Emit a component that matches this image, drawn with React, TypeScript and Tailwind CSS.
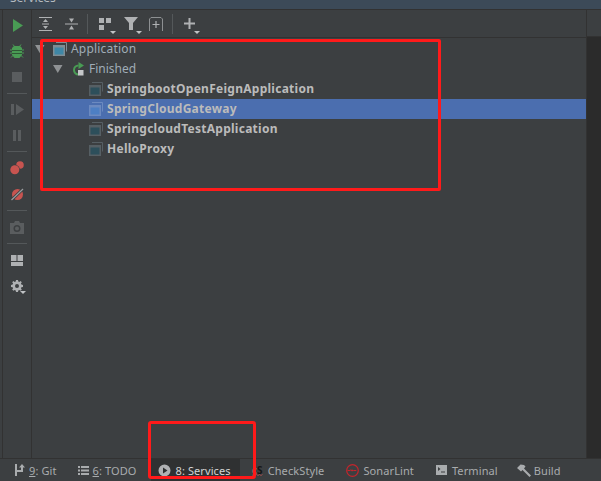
import React from "react";

const font = { fontFamily: '"Noto Sans", "Open Sans", sans-serif' };

function Stack({ sel, bright }: { sel?: boolean; bright?: boolean }) {
  const stroke = sel ? "#6c8ac0" : bright ? "#7f8c93" : "#565f64";
  const fill = sel ? "#4d7fc4" : bright ? "#3f87a6" : "#2d4f5b";
  return (
    <svg width="14" height="14" viewBox="0 0 14 14" className="shrink-0">
      <path d="M3 0.5h10.500v9" fill="none" stroke={stroke} />
      <rect x="0" y="3" width="12" height="11" fill={stroke} />
      <rect x="1.500" y="5.500" width="9" height="7" fill={fill} />
    </svg>
  );
}

function Tri({ className = "" }: { className?: string }) {
  return (
    <svg width="10" height="8" viewBox="0 0 10 8" className={`shrink-0 ${className}`}>
      <path d="M0 0h9.500L4.750 8z" fill="#8f9294" />
    </svg>
  );
}

function Caret() {
  return (
    <svg width="6" height="3" viewBox="0 0 6 3" className="absolute -bottom-[2px] -right-[3px]">
      <path d="M0 0h6L3 3z" fill="#c0c3c5" />
    </svg>
  );
}

function TopIcon({
  children,
  caret,
  className = "",
}: {
  children: React.ReactNode;
  caret?: boolean;
  className?: string;
}) {
  return (
    <div className={`relative w-4 h-4 flex items-center justify-center ${className}`}>
      {children}
      {caret && <Caret />}
    </div>
  );
}

function Slot({ children }: { children: React.ReactNode }) {
  return <div className="h-[26px] w-full flex items-center justify-center relative">{children}</div>;
}

function HSep({ className = "my-[3px]" }: { className?: string }) {
  return <div className={`w-[20px] h-px bg-[#54585a] ${className}`} />;
}

function VSep({ className = "" }: { className?: string }) {
  return <div className={`w-px h-5 bg-[#54585a] ${className}`} />;
}

function Row({ label, sel }: { label: string; sel?: boolean }) {
  return (
    <div className={`flex items-center h-5 pl-[57px] gap-[4px] ${sel ? "bg-[#4b6eaf]" : ""}`}>
      <Stack sel={sel} />
      <span className="text-[12px] font-bold text-[#bbbbbb] leading-none tracking-[0.27px]">{label}</span>
    </div>
  );
}

function ToolTab({
  icon,
  num,
  label,
  active,
  className = "",
  gap = "gap-[4px]",
}: {
  icon: React.ReactNode;
  num?: string;
  label: string;
  active?: boolean;
  className?: string;
  gap?: string;
}) {
  return (
    <div
      className={`flex items-center h-full text-[11px] tracking-[0.1px] ${gap} ${
        active ? "bg-[#2f3132] text-[#d4d4d4] pl-[7px] pr-[9px]" : "text-[#a9acae]"
      } ${className}`}
    >
      {icon}
      <span className="leading-none whitespace-nowrap">
        {num && <span className="underline">{num}</span>}
        {label}
      </span>
    </div>
  );
}

export default function App() {
  return (
    <div className="w-[601px] h-[481px] overflow-hidden bg-[#3c3f41] relative flex flex-col" style={font}>
      {/* title strip */}
      <div className="h-[9px] bg-[#3c4a58] overflow-hidden shrink-0">
        <div className="text-[12px] leading-none text-[#b5bbc0] pl-[10px] -mt-[8px]">Services</div>
      </div>

      <div className="flex flex-1 min-h-0 border-t border-[#323232]">
        {/* left toolbar */}
        <div className="w-[32px] shrink-0 border-r border-[#323232] flex">
          <div className="w-[3px] shrink-0 border-r border-[#323232]" />
          <div className="flex-1 flex flex-col items-center pt-[2px]">
            <Slot>
              <svg width="10" height="13" viewBox="0 0 10 13" className="ml-[1px]"><path d="M0 0l10 6.500L0 13z" fill="#499c54" /></svg>
            </Slot>
            <Slot>
              <svg width="14" height="14" viewBox="0 0 14 14">
                <path d="M4.500 2.500L3 .5M9.500 2.500L11 .5M3 6H0M3 9H0M3 11.500L1 13.500M11 6h3M11 9h3M11 11.500l2 2" stroke="#499c54" fill="none" />
                <path d="M4 2h6l2 2v7l-2.500 3h-5L2 11V4z" fill="#499c54" />
                <path d="M2 6.500h10M2 9.500h10" stroke="#2f5a35" />
              </svg>
            </Slot>
            <Slot><div className="w-[10px] h-[10px] bg-[#5a5d5f]" /></Slot>
            <HSep className="mt-[3px] mb-[2px]" />
            <Slot><svg width="13" height="13" viewBox="0 0 13 13"><path d="M0 1h3v11H0zM5 1l8 5.500L5 12z" fill="#5a5d5f" /></svg></Slot>
            <Slot><svg width="8" height="11" viewBox="0 0 8 11"><path d="M0 0h3v11H0zM5 0h3v11H5z" fill="#5a5d5f" /></svg></Slot>
            <HSep />
            <Slot>
              <svg width="14" height="14" viewBox="0 0 14 14"><circle cx="10" cy="4" r="3.800" fill="#c75450" /><circle cx="4.800" cy="8.800" r="5" fill="#3c3f41" /><circle cx="4.800" cy="8.800" r="4.500" fill="#c75450" /></svg>
            </Slot>
            <Slot>
              <svg width="13" height="13" viewBox="0 0 13 13"><circle cx="6.500" cy="6.500" r="5.500" fill="#c75450" /><path d="M0.500 12L12 1" stroke="#3c3f41" strokeWidth="3" /><path d="M0.500 12L12 1" stroke="#9a9d9f" strokeWidth="1.200" /></svg>
            </Slot>
            <HSep />
            <Slot>
              <svg width="14" height="13" viewBox="0 0 14 13"><path fillRule="evenodd" d="M0 2h4l1-2h4l1 2h4v11H0zM7 4a3.500 3.500 0 100 7 3.500 3.500 0 000-7zM7 5.500a2 2 0 110 4 2 2 0 010-4z" fill="#5a5d5f" /></svg>
            </Slot>
            <HSep />
            <Slot>
              <svg width="12" height="11" viewBox="0 0 12 11"><path d="M0 0h5.500v6H0zM6.500 0H12v6H6.500zM0 7h12v4H0z" fill="#afb1b3" /></svg>
            </Slot>
            <Slot>
              <div className="relative w-3 h-3">
                <svg width="12" height="12" viewBox="0 0 12 12"><path fillRule="evenodd" d="M5 0h2l.3 1.600 1 .4 1.300-.9 1.200 1.200-.9 1.300.5 1 1.600.4v2l-1.600.3-.5 1 .9 1.300-1.200 1.200-1.300-.9-1 .5L7 12H5l-.3-1.600-1-.5-1.300.9-1.200-1.200.9-1.300-.5-1L0 7V5l1.600-.4.5-1-.9-1.300 1.200-1.200 1.300.9 1-.4zM6 4a2 2 0 100 4 2 2 0 000-4z" fill="#afb1b3" /></svg>
                <Caret />
              </div>
            </Slot>
          </div>
        </div>

        {/* main */}
        <div className="flex-1 min-w-0 flex flex-col">
          {/* top toolbar */}
          <div className="h-[28px] shrink-0 border-b border-[#323232] flex items-center pl-[5px]">
            <TopIcon>
              <svg width="13" height="14" viewBox="0 0 13 14"><path d="M0 .5h13M0 13.500h13" stroke="#afb1b3" /><path d="M6.500 2l2.500 3H4zM6.500 12L4 9h5z" fill="#afb1b3" /><path d="M3 7h7" stroke="#afb1b3" /></svg>
            </TopIcon>
            <TopIcon className="ml-[10px]">
              <svg width="13" height="14" viewBox="0 0 13 14"><path d="M0 7h13" stroke="#afb1b3" /><path d="M6.500 5.500L4 1.500h5zM6.500 8.500l2.500 4H4z" fill="#afb1b3" /></svg>
            </TopIcon>
            <VSep className="ml-[8px]" />
            <TopIcon caret className="ml-[9px]">
              <svg width="12" height="12" viewBox="0 0 12 12"><path d="M0 0h5v5H0zM7 0h5v5H7zM0 7h5v5H0z" fill="#afb1b3" /></svg>
            </TopIcon>
            <TopIcon caret className="ml-[10px]">
              <svg width="14" height="13" viewBox="0 0 14 13"><path d="M0 0h14L9 6v7H5V6z" fill="#afb1b3" /></svg>
            </TopIcon>
            <TopIcon className="ml-[9px]">
              <svg width="14" height="14" viewBox="0 0 14 14"><path d="M.5 14V2L2 .5h10L13.500 2v12" fill="none" stroke="#8d9092" /><path d="M7 4v7M3.500 7.500h7" stroke="#afb1b3" strokeWidth="1.200" /></svg>
            </TopIcon>
            <VSep className="ml-[8px]" />
            <TopIcon caret className="ml-[8px]">
              <svg width="11" height="11" viewBox="0 0 11 11"><path d="M4.500 0h2v4.500H11v2H6.500V11h-2V6.500H0v-2h4.500z" fill="#afb1b3" /></svg>
            </TopIcon>
          </div>

          {/* tree */}
          <div className="flex-1 pt-[1px] text-[12px]">
            <div className="flex items-center h-5 pl-[3px]">
              <Tri />
              <span className="ml-[8px] flex"><Stack bright /></span>
              <span className="ml-[4px] text-[#a0adb7] leading-none tracking-[0.2px]">Application</span>
            </div>
            <div className="flex items-center h-5 pl-[21px]">
              <Tri />
              <svg width="13" height="14" viewBox="0 0 13 14" className="ml-[9px] shrink-0">
                <path d="M6.500 12.500A4.500 4.500 0 0 1 6.500 3.500" fill="none" stroke="#499c54" strokeWidth="2" />
                <path d="M6.500 0L12 3.500 6.500 7z" fill="#499c54" />
                <rect x="6" y="8" width="5.500" height="5.500" fill="#c5c7c9" />
              </svg>
              <span className="ml-[4px] text-[#a0adb7] leading-none">Finished</span>
            </div>
            <Row label="SpringbootOpenFeignApplication" />
            <Row label="SpringCloudGateway" sel />
            <Row label="SpringcloudTestApplication" />
            <Row label="HelloProxy" />
          </div>
        </div>

        {/* right column */}
        <div className="w-[15px] shrink-0 border-l border-[#323232] flex flex-col">
          <div className="h-[27px] shrink-0 border-b border-[#323232]" />
          <div className="flex-1 bg-[#2b2b2b]" />
        </div>
      </div>

      {/* bottom bar */}
      <div className="h-[23px] shrink-0 border-t border-[#323232] flex items-center pl-[14px]">
        <ToolTab
          num="9"
          label=": Git"
          icon={<svg width="11" height="12" viewBox="0 0 11 12"><path d="M1 0h2v12H1zM3 6h4V3.500H5L8 0l3 3.500H9V8H3z" fill="#a9acae" /></svg>}
        />
        <ToolTab
          className="ml-[21px]"
          num="6"
          label=": TODO"
          icon={<svg width="11" height="9" viewBox="0 0 11 9"><path d="M0 0h2v2H0zM3 0h8v2H3zM0 3.500h2v2H0zM3 3.500h8v2H3zM0 7h2v2H0zM3 7h8v2H3z" fill="#a9acae" /></svg>}
        />
        <ToolTab
          active
          className="ml-[15px]"
          num="8"
          label=": Services"
          icon={<svg width="13" height="13" viewBox="0 0 13 13"><path fillRule="evenodd" d="M6.500.5a6 6 0 110 12 6 6 0 010-12zM5 3.500v6l4.500-3z" fill="#afb1b3" /></svg>}
        />
        <ToolTab
          className="ml-[12px]"
          gap="gap-[5px]"
          label="CheckStyle"
          icon={
            <span className="relative flex items-center w-[11px] h-[12px] text-[10px] font-bold leading-none">
              <span className="text-[#b0665f]">c</span>
              <span className="text-[#161616]">S</span>
              <svg width="11" height="2" viewBox="0 0 11 2" className="absolute bottom-0 left-0"><path d="M0 1.500l1.500-1 1.500 1 1.500-1 1.500 1 1.500-1 1.500 1 1.500-1" fill="none" stroke="#c75450" strokeWidth="0.700" /></svg>
            </span>
          }
        />
        <ToolTab
          className="ml-[22px]"
          label="SonarLint"
          icon={
            <svg width="13" height="13" viewBox="0 0 13 13">
              <circle cx="6.500" cy="6.500" r="5.800" fill="none" stroke="#c4252c" strokeWidth="1.200" />
              <path d="M1.500 6.500h2.500l.7-.8.7 1.400.7-1.400.7 1.400.7-.6h2.800" fill="none" stroke="#c4252c" />
            </svg>
          }
        />
        <ToolTab
          className="ml-[22px]"
          gap="gap-[5px]"
          label="Terminal"
          icon={<svg width="11" height="10" viewBox="0 0 11 10"><path fillRule="evenodd" d="M0 0h11v10H0zM2 2l2.500 2L2 6zM5 6.500v1h4v-1z" fill="#a9acae" /></svg>}
        />
        <ToolTab
          className="ml-[19px]"
          gap="gap-[3px]"
          label="Build"
          icon={<svg width="14" height="13" viewBox="0 0 14 13"><path d="M0 4l3.500-3.500L7 1l1.500 1.500L7 4.500l7 7L12.500 13 5.500 6 4 7.500z" fill="#a9acae" /></svg>}
        />
      </div>

      {/* red annotations */}
      <div className="absolute left-[40px] top-[39px] w-[401px] h-[152px] border-[3px] border-[#ff1a1a] rounded-[2px]" />
      <div className="absolute left-[148px] top-[421px] w-[108px] h-[58px] border-[3px] border-[#ff1a1a] rounded-[3px]" />
    </div>
  );
}
